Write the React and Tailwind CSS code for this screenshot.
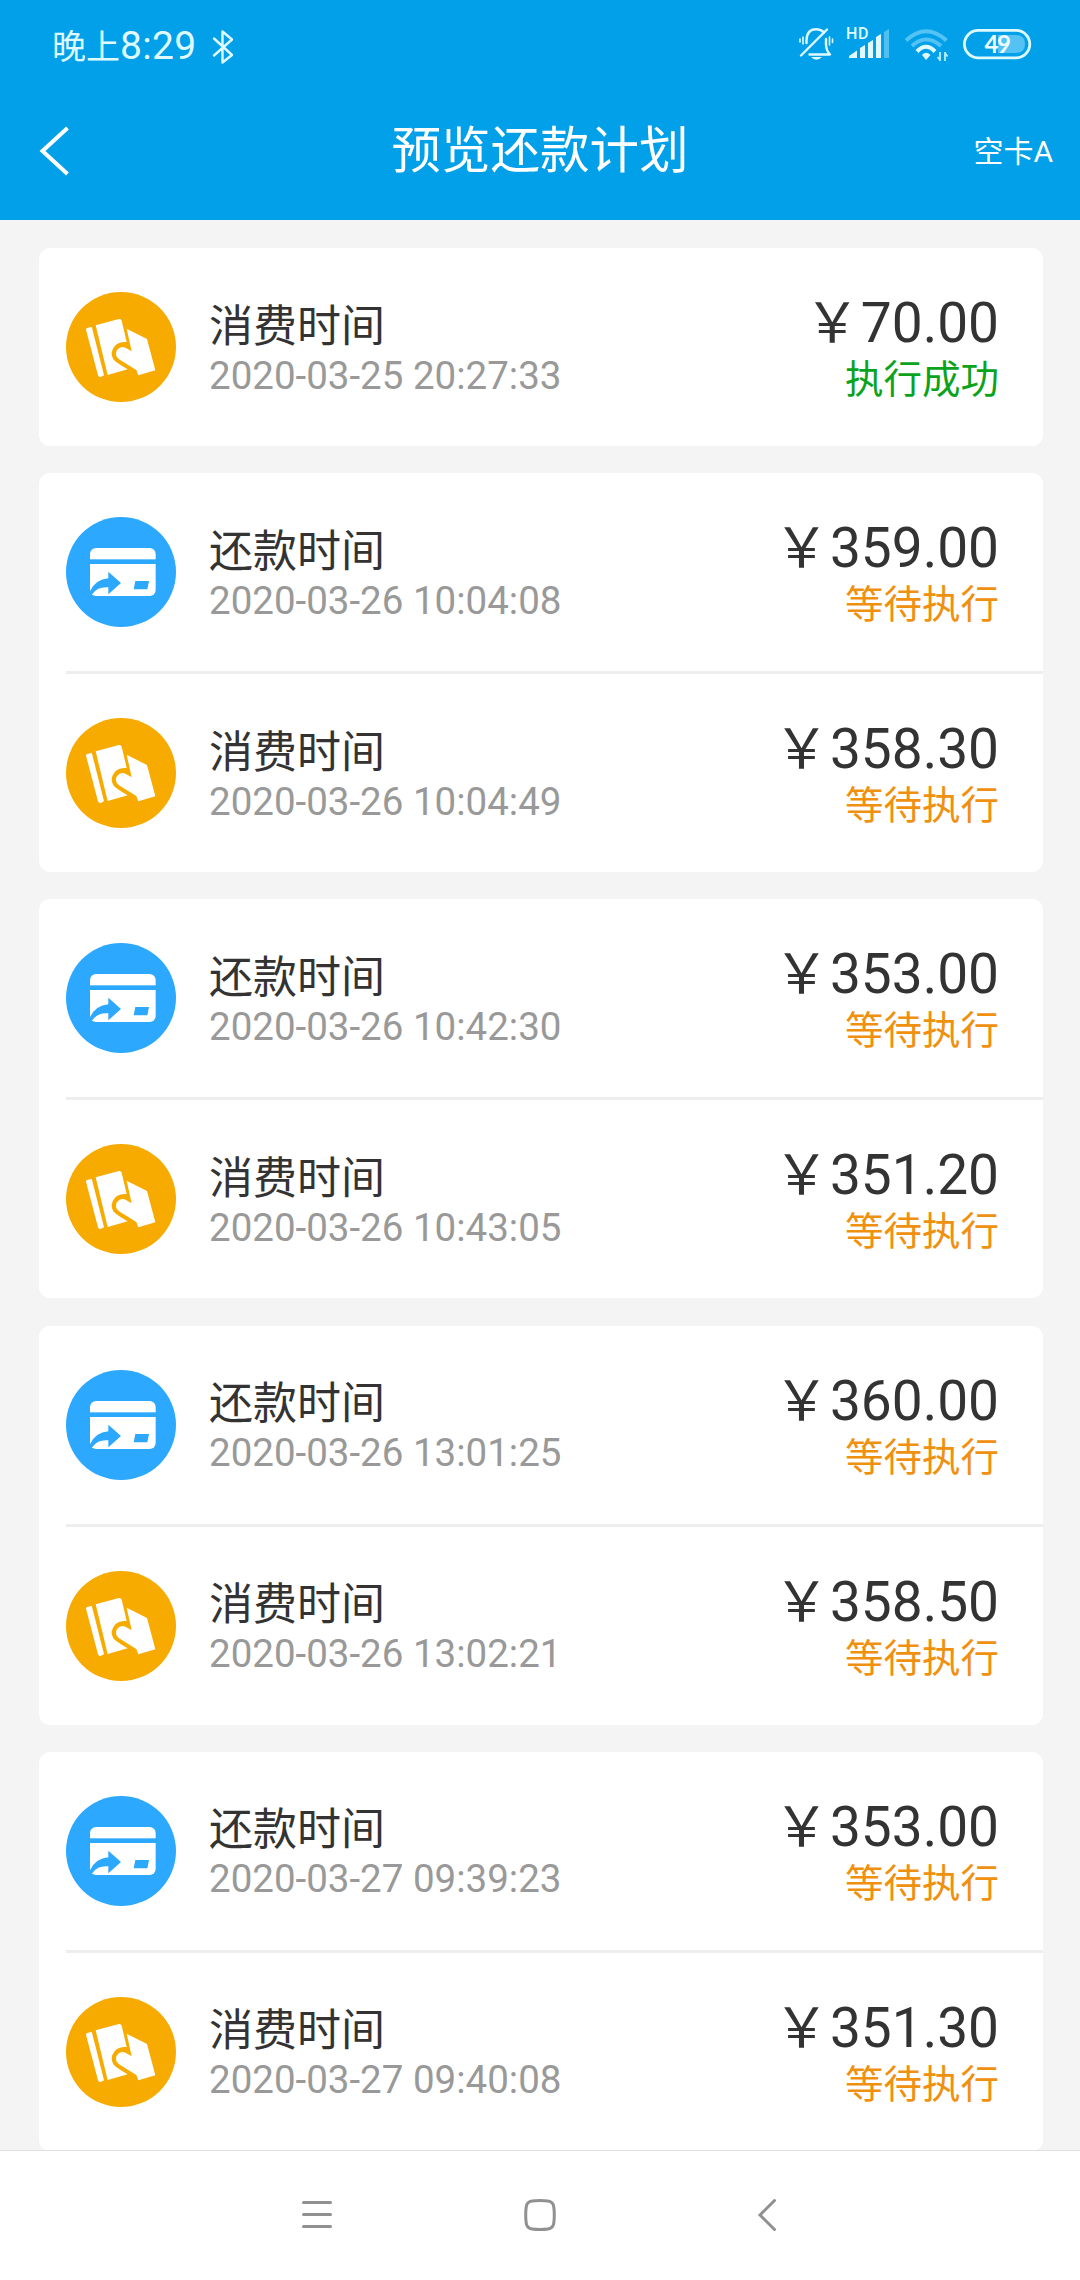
const groups = [
  [{ type: "spend", time: "2020-03-25 20:27:33", amount: "70.00", done: true }],
  [
    { type: "repay", time: "2020-03-26 10:04:08", amount: "359.00" },
    { type: "spend", time: "2020-03-26 10:04:49", amount: "358.30" },
  ],
  [
    { type: "repay", time: "2020-03-26 10:42:30", amount: "353.00" },
    { type: "spend", time: "2020-03-26 10:43:05", amount: "351.20" },
  ],
  [
    { type: "repay", time: "2020-03-26 13:01:25", amount: "360.00" },
    { type: "spend", time: "2020-03-26 13:02:21", amount: "358.50" },
  ],
  [
    { type: "repay", time: "2020-03-27 09:39:23", amount: "353.00" },
    { type: "spend", time: "2020-03-27 09:40:08", amount: "351.30" },
  ],
];

function SpendIcon() {
  return (
    <svg className="size-[110px] shrink-0" viewBox="108 156 330 330">
      <circle cx="273" cy="321" r="165" fill="#f7ab00" />
      <g fill="#fff">
        <path d="M170 265 L182 261 Q185 260 186 263 L222 406 L212 411 Q206 412 204 406 L168 269 Q168 266 170 265Z" />
        <path d="M197 256 L267 237 Q273 236 275 242 L290 306 Q268 304 255 317 Q238 337 250 358 Q256 367 293 388 L233 405Z" />
        <path d="M290 266 L351 297 L376 391 L325 406 L319 390 L267 358 Q252 345 261 330 Q273 315 288 324 L305 334Z" />
      </g>
    </svg>
  );
}

function RepayIcon() {
  return (
    <svg className="size-[110px] shrink-0" viewBox="108 156 330 330">
      <circle cx="273" cy="321" r="165" fill="#2ca8ff" />
      <rect x="180" y="249" width="197" height="144" rx="18" fill="#fff" />
      <g fill="#2ca8ff">
        <rect x="179" y="283" width="199" height="14" />
        <path d="M179 380 Q196 343 235 340 L235 320 L273 354 L235 388 L235 367 Q204 364 188 386 L184 390 L179 390Z" />
        <path d="M316 348 H357 L352 373 H311Z" />
      </g>
    </svg>
  );
}

function Row({ item }) {
  return (
    <div className="flex h-[198px] items-center pr-[44px]">
      {item.type === "spend" ? <SpendIcon /> : <RepayIcon />}
      <div className="ml-[33px] flex flex-1 flex-col pt-[5px]">
        <span className="text-[44px] leading-[52px] text-[#333]">
          {item.type === "spend" ? "消费时间" : "还款时间"}
        </span>
        <span className="text-[38.5px] leading-[46px] text-[#999]">{item.time}</span>
      </div>
      <div className="flex flex-col items-end gap-[2px] pt-[4px]">
        <span className="text-[55px] leading-[60px] text-[#333]">
          <span className="mr-px">{"\uFFE5"}</span>
          {item.amount}
        </span>
        <span
          className={
            item.done
              ? "text-[38.5px] leading-[50px] text-[#0ca31c]"
              : "text-[38.5px] leading-[50px] text-[#f09010]"
          }
        >
          {item.done ? "执行成功" : "等待执行"}
        </span>
      </div>
    </div>
  );
}

function StatusIcons() {
  return (
    <svg className="mt-[2px] h-[40px] w-[240px]" viewBox="0 0 240 40" fill="none">
      {/* muted bell */}
      <g stroke="#dffaff" strokeWidth="2.4" strokeLinecap="round" strokeLinejoin="round">
        <path d="M11.500 18 V15 Q12 4.200 21 4.200 Q26 4.200 29 7.500" />
        <path d="M31 14 V20 Q31.500 26 35 29.500 H14.500" />
        <path d="M6 30.500 L32 4.500" />
        <path d="M8 12 V19 M5 14 V17 M34.500 12 V20 M37.500 14 V17.500" strokeWidth="1.600" />
      </g>
      <path d="M16 32 H27 Q21.500 37.500 16 32Z" fill="#dffaff" />
      {/* signal */}
      <text x="51" y="14" fontFamily="Roboto" fontSize="16" fontWeight="500" letterSpacing="0.6" fill="#dffaff">HD</text>
      <g fill="#dffaff">
        <path d="M54 33 V31 L62 25.500 V33Z" />
        <path d="M65 33 V23 L70 20 V33Z" />
        <path d="M73 33 V18 L78 15 V33Z" />
        <path d="M81 33 V12 L86 9 V33Z" />
        <path d="M89 33 V7 L94 4 V33Z" opacity=".35" />
      </g>
      {/* wifi */}
      <g strokeWidth="4">
        <path d="M111 15.500 Q131 -3 151.500 15.500" stroke="#55c2f4" />
        <path d="M117 21 Q131 8 146 21" stroke="#55c2f4" />
        <path d="M122 26.500 Q131 17 140 26.500" stroke="#dffaff" />
      </g>
      <path d="M127 30 Q131 25.500 135.500 30 L131 35Z" fill="#dffaff" />
      <path d="M145 27 V36 M142.500 32 L145 35 M150 27 V36 M150 28 L152.500 31.500" stroke="#b8ecff" strokeWidth="1.800" />
      {/* battery */}
      <path d="M203 10 H221 Q230 10 230 19 Q230 28 221 28 H203Z" fill="#55c2f4" />
      <rect x="169.400" y="5.400" width="65.400" height="27.400" rx="13.700" stroke="#dffaff" strokeWidth="2.800" />
      <text x="202" y="28" textAnchor="middle" fontFamily="Lato" fontSize="24" fontWeight="700" letterSpacing="-1.5" fill="#eefcff">49</text>
    </svg>
  );
}

export default function App() {
  return (
    <div className="flex h-[2280px] w-[1080px] flex-col overflow-hidden bg-[#f4f4f4] font-['Roboto','Noto_Sans_CJK_SC',sans-serif]">
      <header className="h-[220px] shrink-0 bg-[#02a0e9] text-white">
        <div className="flex h-[82px] items-center justify-between pt-[6px] pr-[45px] pl-[52px] text-[#dffaff]">
          <div className="flex items-center pt-[5px]">
            <span className="text-[33px] leading-[40px]"><span className="text-[34px]">晚上</span><span className="text-[39px] tracking-[0.3px]">8:29</span></span>
            <svg className="ml-[16px] h-[36px] w-[22px]" viewBox="0 0 22 36" fill="none" stroke="#dffaff" strokeWidth="2.4" strokeLinejoin="round" strokeLinecap="round">
              <path d="M2 9.500 L20 26 L10.500 33.500 V2.500 L20 10.500 L2 26.500" />
            </svg>
          </div>
          <StatusIcons />
        </div>
        <div className="grid h-[138px] grid-cols-3 items-center px-[27px]">
          <svg className="ml-[11px] h-[50px] w-[32px]" viewBox="0 0 32 50" fill="none" stroke="#fff" strokeWidth="4">
            <path d="M29.500 2 L4.500 25 L29.500 48" />
          </svg>
          <h1 className="text-center text-[49.5px] leading-[60px] whitespace-nowrap">预览还款计划</h1>
          <span className="pt-px text-right text-[30px]">空卡A</span>
        </div>
      </header>

      <main className="flex min-h-0 flex-1 flex-col gap-[27.2px] overflow-hidden pt-[28px] pr-[37px] pl-[39px]">
        {groups.map((group) => (
          <section key={group[0].time} className="shrink-0 rounded-[11px] bg-white pl-[27px]">
            {group.map((item, i) => (
              <div key={item.time} className={i > 0 ? "border-t-[3px] border-[#eee]" : ""}>
                <Row item={item} />
              </div>
            ))}
          </section>
        ))}
      </main>

      <nav className="flex h-[130px] shrink-0 items-center justify-center gap-[191px] border-t border-[#e0e0e0] bg-white pb-px">
        <svg className="h-[36px] w-[32px]" viewBox="0 0 32 36" stroke="#909090" strokeWidth="3" strokeLinecap="round">
          <path d="M2.500 5.500 H29.500 M2.500 17.500 H29.500 M2.500 29.500 H29.500" />
        </svg>
        <svg className="h-[36px] w-[32px]" viewBox="0 0 32 36" fill="none" stroke="#909090" strokeWidth="3">
          <path d="M8 4 Q16 3 24 4 Q29 4.500 29.800 10 Q30.800 18 29.800 26 Q29 31.500 24 32 Q16 33 8 32 Q3 31.500 2.200 26 Q1.200 18 2.200 10 Q3 4.500 8 4Z" />
        </svg>
        <svg className="h-[36px] w-[32px]" viewBox="0 0 32 36" fill="none" stroke="#909090" strokeWidth="3" strokeLinecap="round">
          <path d="M27.500 3.500 L13 18 L27.500 32.500" />
        </svg>
      </nav>
    </div>
  );
}
